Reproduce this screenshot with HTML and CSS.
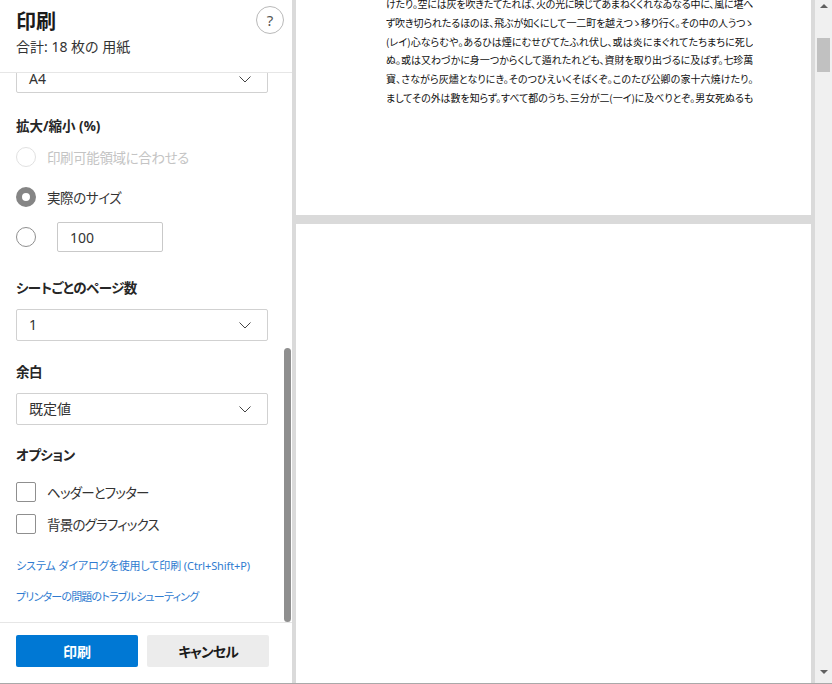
FILE: index.html
```html
<!DOCTYPE html>
<html lang="ja">
<head>
<meta charset="utf-8">
<title>印刷</title>
<link rel="stylesheet" href="styles.css">
</head>
<body>
<div class="window">
  <aside class="sidebar">
    <header class="side-header">
      <div class="titles">
        <h1 class="title">印刷</h1>
        <p class="subtitle">合計: 18 枚の 用紙</p>
      </div>
      <button class="help" type="button">?</button>
    </header>

    <div class="side-scroll">
      <div class="side-content">
        <div class="select first-select"><span>A4</span><svg class="chev" width="12" height="7" viewBox="0 0 12 7"><path d="M0.5 0.5 L6 6 L11.5 0.5" fill="none" stroke="#444" stroke-width="1"/></svg></div>

        <h2 class="heading h-scale">拡大/縮小 (%)</h2>
        <div class="radio-row disabled"><span class="radio radio-disabled"></span><span class="label">印刷可能領域に合わせる</span></div>
        <div class="radio-row"><span class="radio radio-checked"></span><span class="label">実際のサイズ</span></div>
        <div class="radio-row"><span class="radio"></span><span class="num-input">100</span></div>

        <h2 class="heading">シートごとのページ数</h2>
        <div class="select"><span>1</span><svg class="chev" width="12" height="7" viewBox="0 0 12 7"><path d="M0.5 0.5 L6 6 L11.5 0.5" fill="none" stroke="#444" stroke-width="1"/></svg></div>

        <h2 class="heading">余白</h2>
        <div class="select"><span>既定値</span><svg class="chev" width="12" height="7" viewBox="0 0 12 7"><path d="M0.5 0.5 L6 6 L11.5 0.5" fill="none" stroke="#444" stroke-width="1"/></svg></div>

        <h2 class="heading h-options">オプション</h2>
        <div class="check-row"><span class="checkbox"></span><span class="label">ヘッダーとフッター</span></div>
        <div class="check-row"><span class="checkbox"></span><span class="label">背景のグラフィックス</span></div>

        <div class="links">
          <a class="link">システム ダイアログを使用して印刷 (Ctrl+Shift+P)</a>
          <a class="link link-kana">プリンターの問題のトラブルシューティング</a>
        </div>
      </div>
      <div class="side-thumb"></div>
    </div>

    <footer class="side-footer">
      <button class="btn btn-primary" type="button">印刷</button>
      <button class="btn btn-secondary" type="button">キャンセル</button>
    </footer>
  </aside>

  <main class="preview">
    <div class="pages">
      <div class="page page-first">
        <div class="page-text">
          <p>けたり。空には灰を吹きたてたれば、火の光に映じてあまねくくれなゐなる中に、風に堪へ</p>
          <p>ず吹き切られたるほのほ、飛ぶが如くにして一二町を越えつゝ移り行く。その中の人うつゝ</p>
          <p>(レイ)心ならむや。あるひは煙にむせびてたふれ伏し、或は炎にまぐれてたちまちに死し</p>
          <p>ぬ。或は又わづかに身一つからくして遁れたれども、資財を取り出づるに及ばず。七珍萬</p>
          <p>寶、さながら灰燼となりにき。そのつひえいくそばくぞ。このたび公卿の家十六焼けたり。</p>
          <p>ましてその外は數を知らず。すべて都のうち、三分が二(一イ)に及べりとぞ。男女死ぬるも</p>
        </div>
      </div>
      <div class="page page-second"></div>
    </div>
    <div class="scrollbar">
      <div class="arrow arrow-up"></div>
      <div class="thumb"></div>
      <div class="track-fill"></div>
      <div class="arrow arrow-down"></div>
    </div>
  </main>
</div>
</body>
</html>
```

FILE: styles.css
```css
* { box-sizing: border-box; }

html, body {
  margin: 0;
  padding: 0;
}

body {
  width: 832px;
  height: 684px;
  overflow: hidden;
  background: #ffffff;
  font-family: "Noto Sans", "Noto Sans CJK JP", sans-serif;
  font-feature-settings: "palt";
  color: #222;
}

.window {
  display: flex;
  width: 832px;
  height: 684px;
  border-bottom: 1px solid #a9a9a9;
}

/* ---------- sidebar ---------- */
.sidebar {
  width: 292px;
  flex: 0 0 292px;
  display: flex;
  flex-direction: column;
  background: #fff;
}

.side-header {
  height: 73px;
  flex: 0 0 73px;
  display: flex;
  justify-content: space-between;
  align-items: flex-start;
  padding: 8px 8px 0 16px;
  border-bottom: 1px solid #e6e6e6;
}

.title {
  margin: 0;
  font-size: 20px;
  line-height: 28px;
  font-weight: 700;
  color: #1b1b1b;
}

.subtitle {
  margin: 1px 0 0;
  font-size: 14px;
  line-height: 20px;
  color: #333;
}

.help {
  width: 28px;
  height: 28px;
  margin-top: -2px;
  border: 1px solid #b9b9b9;
  border-radius: 50%;
  background: #fff;
  color: #555;
  font-family: "Noto Sans", sans-serif;
  font-size: 15px;
  line-height: 24px;
  padding: 0;
  text-align: center;
}

.side-scroll {
  flex: 1 1 auto;
  position: relative;
  overflow: hidden;
}

.side-content {
  margin-top: -12px;
  padding: 0 24px 0 16px;
}

.side-thumb {
  position: absolute;
  right: 1px;
  top: 275px;
  width: 7px;
  height: 274px;
  border-radius: 4px;
  background: #8f8f8f;
}

.select {
  width: 252px;
  height: 32px;
  border: 1px solid #d1d1d1;
  border-radius: 2px;
  display: flex;
  align-items: center;
  justify-content: space-between;
  padding: 0 16px 0 12px;
  font-size: 14px;
  line-height: 18px;
  color: #333;
}

.first-select {
  align-items: flex-end;
  padding-bottom: 4px;
}

.first-select .chev { margin-bottom: 5px; }

.chev { display: block; }

.heading {
  margin: 21px 0 11px;
  font-size: 13.5px;
  letter-spacing: -0.5px;
  line-height: 20px;
  font-weight: 700;
  color: #262626;
}

.h-scale { margin-top: 23px; margin-bottom: 1px; letter-spacing: 0; }
.h-options { margin-top: 20px; margin-bottom: 11px; }

.radio-row {
  height: 40px;
  display: flex;
  align-items: center;
  font-size: 13.5px;
  letter-spacing: -0.4px;
  color: #333;
}

.radio {
  width: 20px;
  height: 20px;
  border: 1px solid #8f8f8f;
  border-radius: 50%;
  flex: 0 0 20px;
  margin-right: 11px;
}

.radio-disabled { border-color: #e1e1e1; }
.disabled .label { color: #c4c4c4; }

.radio-checked {
  border: 6px solid #858585;
}

.num-input {
  width: 106px;
  height: 30px;
  margin-left: 10px;
  border: 1px solid #c9c9c9;
  border-radius: 2px;
  padding-left: 12px;
  display: flex;
  align-items: center;
  font-size: 14px;
  letter-spacing: 0;
  color: #333;
}

.check-row {
  height: 32px;
  display: flex;
  align-items: center;
  font-size: 13.5px;
  letter-spacing: -0.8px;
  color: #333;
}

.checkbox {
  width: 20px;
  height: 20px;
  border: 1px solid #8f8f8f;
  border-radius: 2px;
  margin-right: 11px;
  flex: 0 0 20px;
}

.links {
  margin-top: 11px;
  display: flex;
  flex-direction: column;
}

.link {
  display: block;
  height: 31px;
  padding-top: 7px;
  font-size: 11px;
  letter-spacing: -0.1px;
  line-height: 16px;
  color: #2f7bd0;
  white-space: nowrap;
}

.link-kana { letter-spacing: -0.8px; }

.side-footer {
  height: 61px;
  flex: 0 0 61px;
  border-top: 1px solid #e6e6e6;
  padding: 12px 0 0 16px;
  display: flex;
  gap: 9px;
  align-items: flex-start;
}

.btn {
  width: 122px;
  height: 32px;
  border: none;
  border-radius: 2px;
  font-family: "Noto Sans", "Noto Sans CJK JP", sans-serif;
  font-feature-settings: "palt";
  font-size: 14px;
  font-weight: 700;
  padding: 0;
}

.btn-primary { background: #0078d4; color: #fff; }
.btn-secondary { background: #ececec; color: #1b1b1b; letter-spacing: -1px; }

/* ---------- preview ---------- */
.preview {
  flex: 1 1 auto;
  display: flex;
  background: #dadada;
}

.pages {
  flex: 1 1 auto;
  padding: 0 4px;
  overflow: hidden;
}

.page {
  background: #fff;
  width: 515px;
}

.page-first {
  height: 215px;
  overflow: hidden;
}

.page-second {
  margin-top: 9px;
  height: 480px;
}

.page-text {
  margin-top: -5px;
  padding-left: 90px;
  width: 458px;
  font-family: "Noto Sans CJK JP", sans-serif;
  font-feature-settings: "palt";
  font-size: 10px;
  letter-spacing: -0.35px;
  color: #111;
}

.page-text p {
  margin: 0;
  width: 367px;
  line-height: 18.8px;
  height: 18.8px;
  overflow: hidden;
  text-align: justify;
  text-align-last: justify;
}

.scrollbar {
  width: 17px;
  flex: 0 0 17px;
  background: #f0f0f0;
  display: flex;
  flex-direction: column;
  align-items: center;
}

.arrow {
  width: 0;
  height: 0;
  border-left: 4px solid transparent;
  border-right: 4px solid transparent;
}

.arrow-up {
  margin-top: 4px;
  border-bottom: 4px solid #606060;
}

.arrow-down {
  margin-bottom: 9px;
  border-top: 4px solid #606060;
}

.thumb {
  margin-top: 30px;
  width: 13px;
  height: 34px;
  background: #c1c1c1;
}

.track-fill { flex: 1 1 auto; }
```
